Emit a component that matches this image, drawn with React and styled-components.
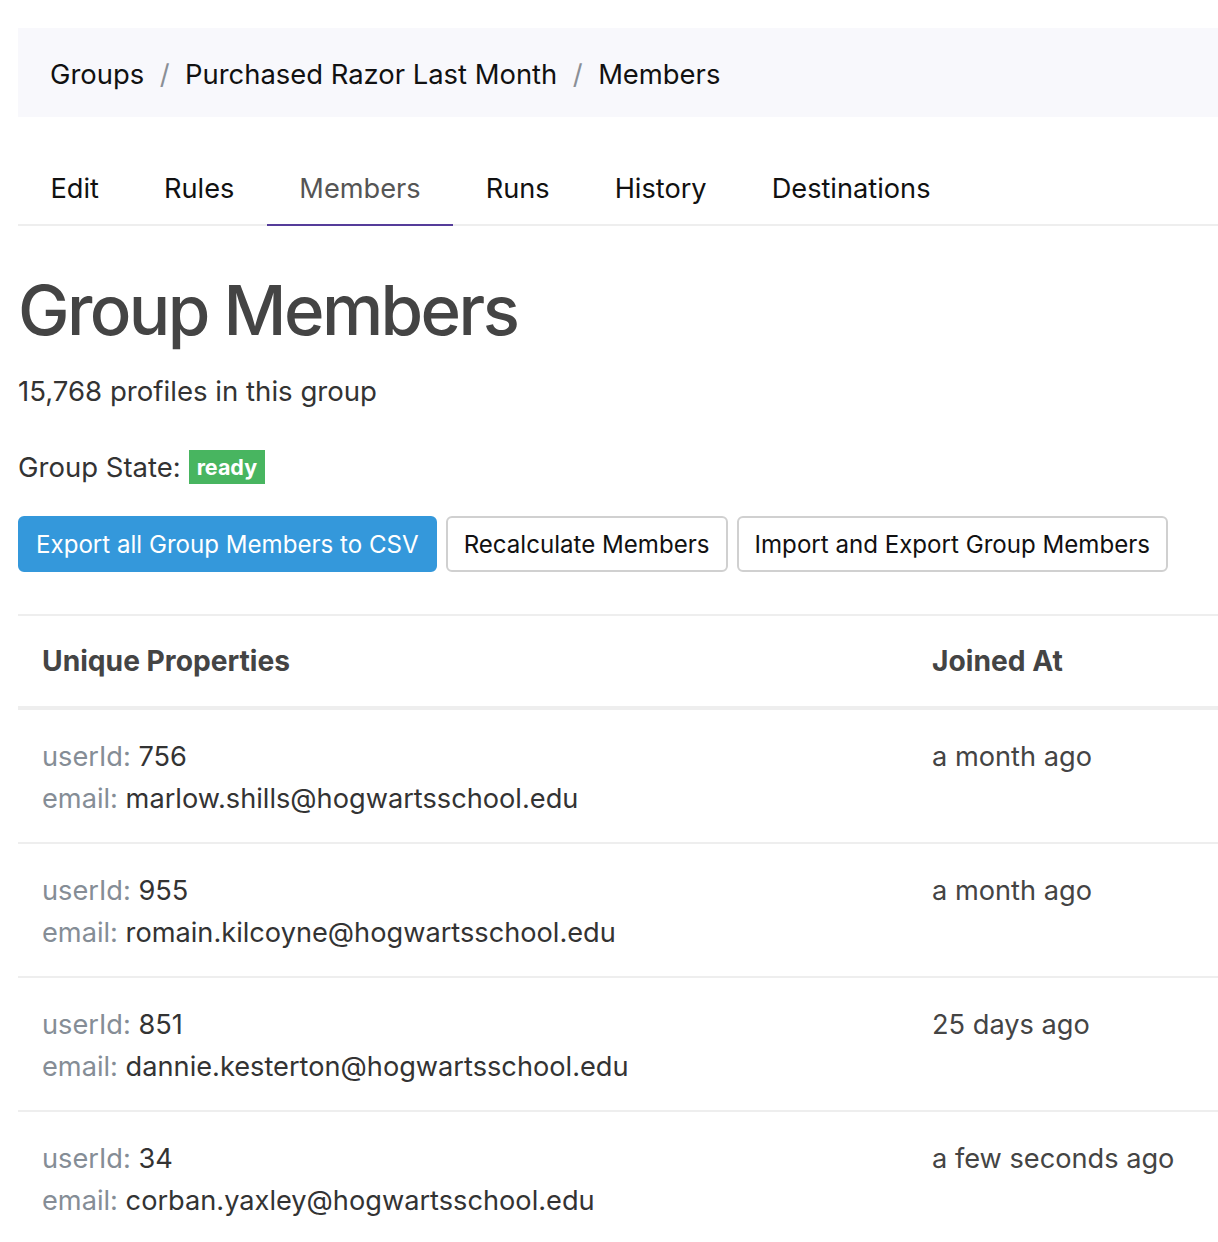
import React from "react";
import styled, { createGlobalStyle } from "styled-components";

const Global = createGlobalStyle`
  html, body { margin: 0; padding: 0; background: #fff; }
  body { font-family: Inter, "Liberation Sans", sans-serif; color: #333; -webkit-font-smoothing: antialiased; }
  * { box-sizing: border-box; }
`;

const Page = styled.div`
  padding: 28px 0 0 18px;
  width: 100%;
  overflow: hidden;
`;

const Breadcrumb = styled.nav`
  background: #f8f8fc;
  height: 89px;
  display: flex;
  align-items: center;
  padding: 2px 0 0 32px;
  font-size: 27.4px;
  color: #111;
`;

const Crumb = styled.span`
  color: #111;
`;

const Sep = styled.span`
  color: #8a8f96;
  padding: 0 15.5px;
`;

const Tabs = styled.div`
  display: flex;
  margin-top: 35px;
  border-bottom: 2px solid #eeeeee;
`;

const Tab = styled.div`
  padding: 0 32.5px;
  height: 74px;
  display: flex;
  align-items: center;
  font-size: 27.2px;
  color: ${(p) => (p.$active ? "#555" : "#111")};
  margin-bottom: -2px;
  border-bottom: 2px solid ${(p) => (p.$active ? "#553c9a" : "transparent")};
`;

const Title = styled.h1`
  margin: 42px 0 0 0;
  font-size: 69px;
  line-height: 84px;
  font-weight: 500;
  color: #444;
  letter-spacing: -2.6px;
`;

const Subtitle = styled.p`
  margin: 21px 0 0 0;
  font-size: 27.6px;
  line-height: 36px;
  color: #333;
`;

const StateRow = styled.div`
  margin-top: 41px;
  display: flex;
  align-items: center;
  font-size: 27.5px;
  color: #333;
  height: 34px;
`;

const Badge = styled.span`
  margin-left: 8px;
  background: #48b560;
  color: #fff;
  font-weight: 700;
  font-size: 21.5px;
  height: 34px;
  padding: 0 8px;
  display: inline-flex;
  align-items: center;
`;

const Actions = styled.div`
  display: flex;
  gap: 9px;
  margin-top: 32px;
`;

const Button = styled.button`
  font-family: inherit;
  height: 56px;
  padding: 0 16px;
  font-size: 24.1px;
  border-radius: 6px;
  border: 2px solid ${(p) => (p.$primary ? "#3498db" : "#d0d0d0")};
  background: ${(p) => (p.$primary ? "#3498db" : "#fff")};
  color: ${(p) => (p.$primary ? "#fff" : "#111")};
`;

const Table = styled.div`
  margin-top: 42px;
  border-top: 2px solid #eeeeee;
`;

const Row = styled.div`
  display: grid;
  grid-template-columns: 890px 1fr;
  border-bottom: ${(p) => (p.$head ? "4px" : "2px")} solid #eeeeee;
  height: ${(p) => (p.$head ? "94px" : "134px")};
  align-items: ${(p) => (p.$head ? "center" : "start")};
`;

const HeadCell = styled.div`
  padding: 0 24px;
  font-size: 28.2px;
  font-weight: 700;
  color: #444;
`;

const Cell = styled.div`
  padding: 26px 24px 0 24px;
  font-size: 27.2px;
  line-height: 42px;
  color: #444;
`;

const Label = styled.span`
  color: #858d96;
`;

const Value = styled.span`
  color: #333;
`;

const crumbs = ["Groups", "Purchased Razor Last Month", "Members"];
const tabs = ["Edit", "Rules", "Members", "Runs", "History", "Destinations"];
const members = [
  { id: "756", email: "marlow.shills@hogwartsschool.edu", joined: "a month ago" },
  { id: "955", email: "romain.kilcoyne@hogwartsschool.edu", joined: "a month ago" },
  { id: "851", email: "dannie.kesterton@hogwartsschool.edu", joined: "25 days ago" },
  { id: "34", email: "corban.yaxley@hogwartsschool.edu", joined: "a few seconds ago" },
];

export default function App() {
  return (
    <>
      <Global />
      <Page>
        <Breadcrumb>
          {crumbs.map((c, i) => (
            <React.Fragment key={c}>
              {i > 0 && <Sep>/</Sep>}
              <Crumb>{c}</Crumb>
            </React.Fragment>
          ))}
        </Breadcrumb>
        <Tabs>
          {tabs.map((t) => (
            <Tab key={t} $active={t === "Members"}>
              {t}
            </Tab>
          ))}
        </Tabs>
        <Title>Group Members</Title>
        <Subtitle>15,768 profiles in this group</Subtitle>
        <StateRow>
          Group State: <Badge>ready</Badge>
        </StateRow>
        <Actions>
          <Button $primary>Export all Group Members to CSV</Button>
          <Button>Recalculate Members</Button>
          <Button>Import and Export Group Members</Button>
        </Actions>
        <Table>
          <Row $head>
            <HeadCell>Unique Properties</HeadCell>
            <HeadCell>Joined At</HeadCell>
          </Row>
          {members.map((m) => (
            <Row key={m.id}>
              <Cell>
                <div>
                  <Label>userId: </Label>
                  <Value>{m.id}</Value>
                </div>
                <div>
                  <Label>email: </Label>
                  <Value>{m.email}</Value>
                </div>
              </Cell>
              <Cell>{m.joined}</Cell>
            </Row>
          ))}
        </Table>
      </Page>
    </>
  );
}
